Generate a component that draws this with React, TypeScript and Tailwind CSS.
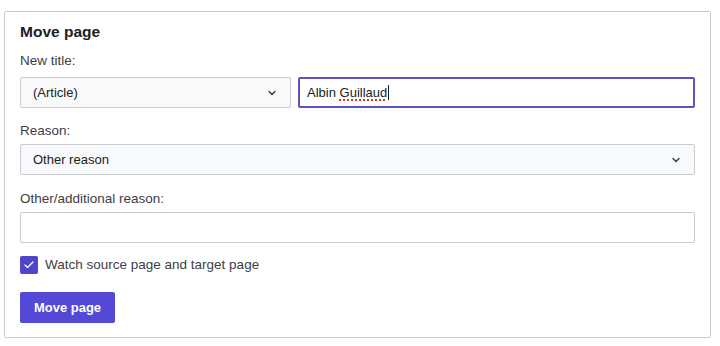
import { Check, ChevronDown } from "lucide-react";

const font = { fontFamily: '"Liberation Sans", Arial, sans-serif' };

function Select({ value, className }: { value: string; className?: string }) {
  return (
    <div
      className={
        "flex h-[31px] items-center justify-between rounded-[2px] border border-[#c8ccd1] bg-[#f8f9fa] pl-[12px] pr-[12px] text-[13px] text-[#202122] " +
        (className ?? "")
      }
    >
      <span>{value}</span>
      <ChevronDown className="h-[12px] w-[12px] text-[#404244]" strokeWidth={3} />
    </div>
  );
}

export default function App() {
  return (
    <div className="h-[346px] w-[720px] bg-white pl-[4px] pt-[11px]" style={font}>
      <div className="flex h-[327px] w-[707px] flex-col rounded-[2px] border border-[#c8ccd1] px-[15px] pt-[10px] text-[#202122]">
        <h1 className="h-[20px] text-[15.5px] font-bold leading-[20px] text-[#202122]">Move page</h1>

        <label className="mt-[9px] h-[20px] text-[13.5px] leading-[20px] text-[#3d4043]">New title:</label>
        <div className="mt-[6px] flex gap-[7px]">
          <Select value="(Article)" className="w-[271px]" />
          <div className="flex h-[31px] flex-1 items-center rounded-[2px] border-2 border-[#5f52bf] bg-white pl-[7px] text-[13px] text-[#202122]">
            <span>
              Albin{" "}
              <span className="underline decoration-[#d33] decoration-dotted decoration-[1.5px] underline-offset-[3px]">
                Guillaud
              </span>
            </span>
            <span className="ml-[1px] h-[15px] w-[1px] bg-[#202122]" />
          </div>
        </div>

        <label className="mt-[13px] h-[20px] text-[13.5px] leading-[20px] text-[#3d4043]">Reason:</label>
        <Select value="Other reason" className="mt-[3px] w-full" />

        <label className="mt-[14px] h-[20px] text-[13.5px] leading-[20px] text-[#3d4043]">
          Other/additional reason:
        </label>
        <div className="mt-[3px] h-[31px] w-full rounded-[2px] border border-[#c8ccd1] bg-white" />

        <div className="mt-[12px] flex items-center gap-[7px]">
          <div className="flex h-[18px] w-[18px] items-center justify-center rounded-[2px] bg-[#4f45c9]">
            <Check className="h-[12px] w-[12px] text-white" strokeWidth={2.5} />
          </div>
          <span className="text-[13.5px] text-[#3d4043]">Watch source page and target page</span>
        </div>

        <button className="mt-[17px] h-[31px] w-[95px] rounded-[2px] bg-[#5349d6] text-[13px] font-bold text-white">
          Move page
        </button>
      </div>
    </div>
  );
}
